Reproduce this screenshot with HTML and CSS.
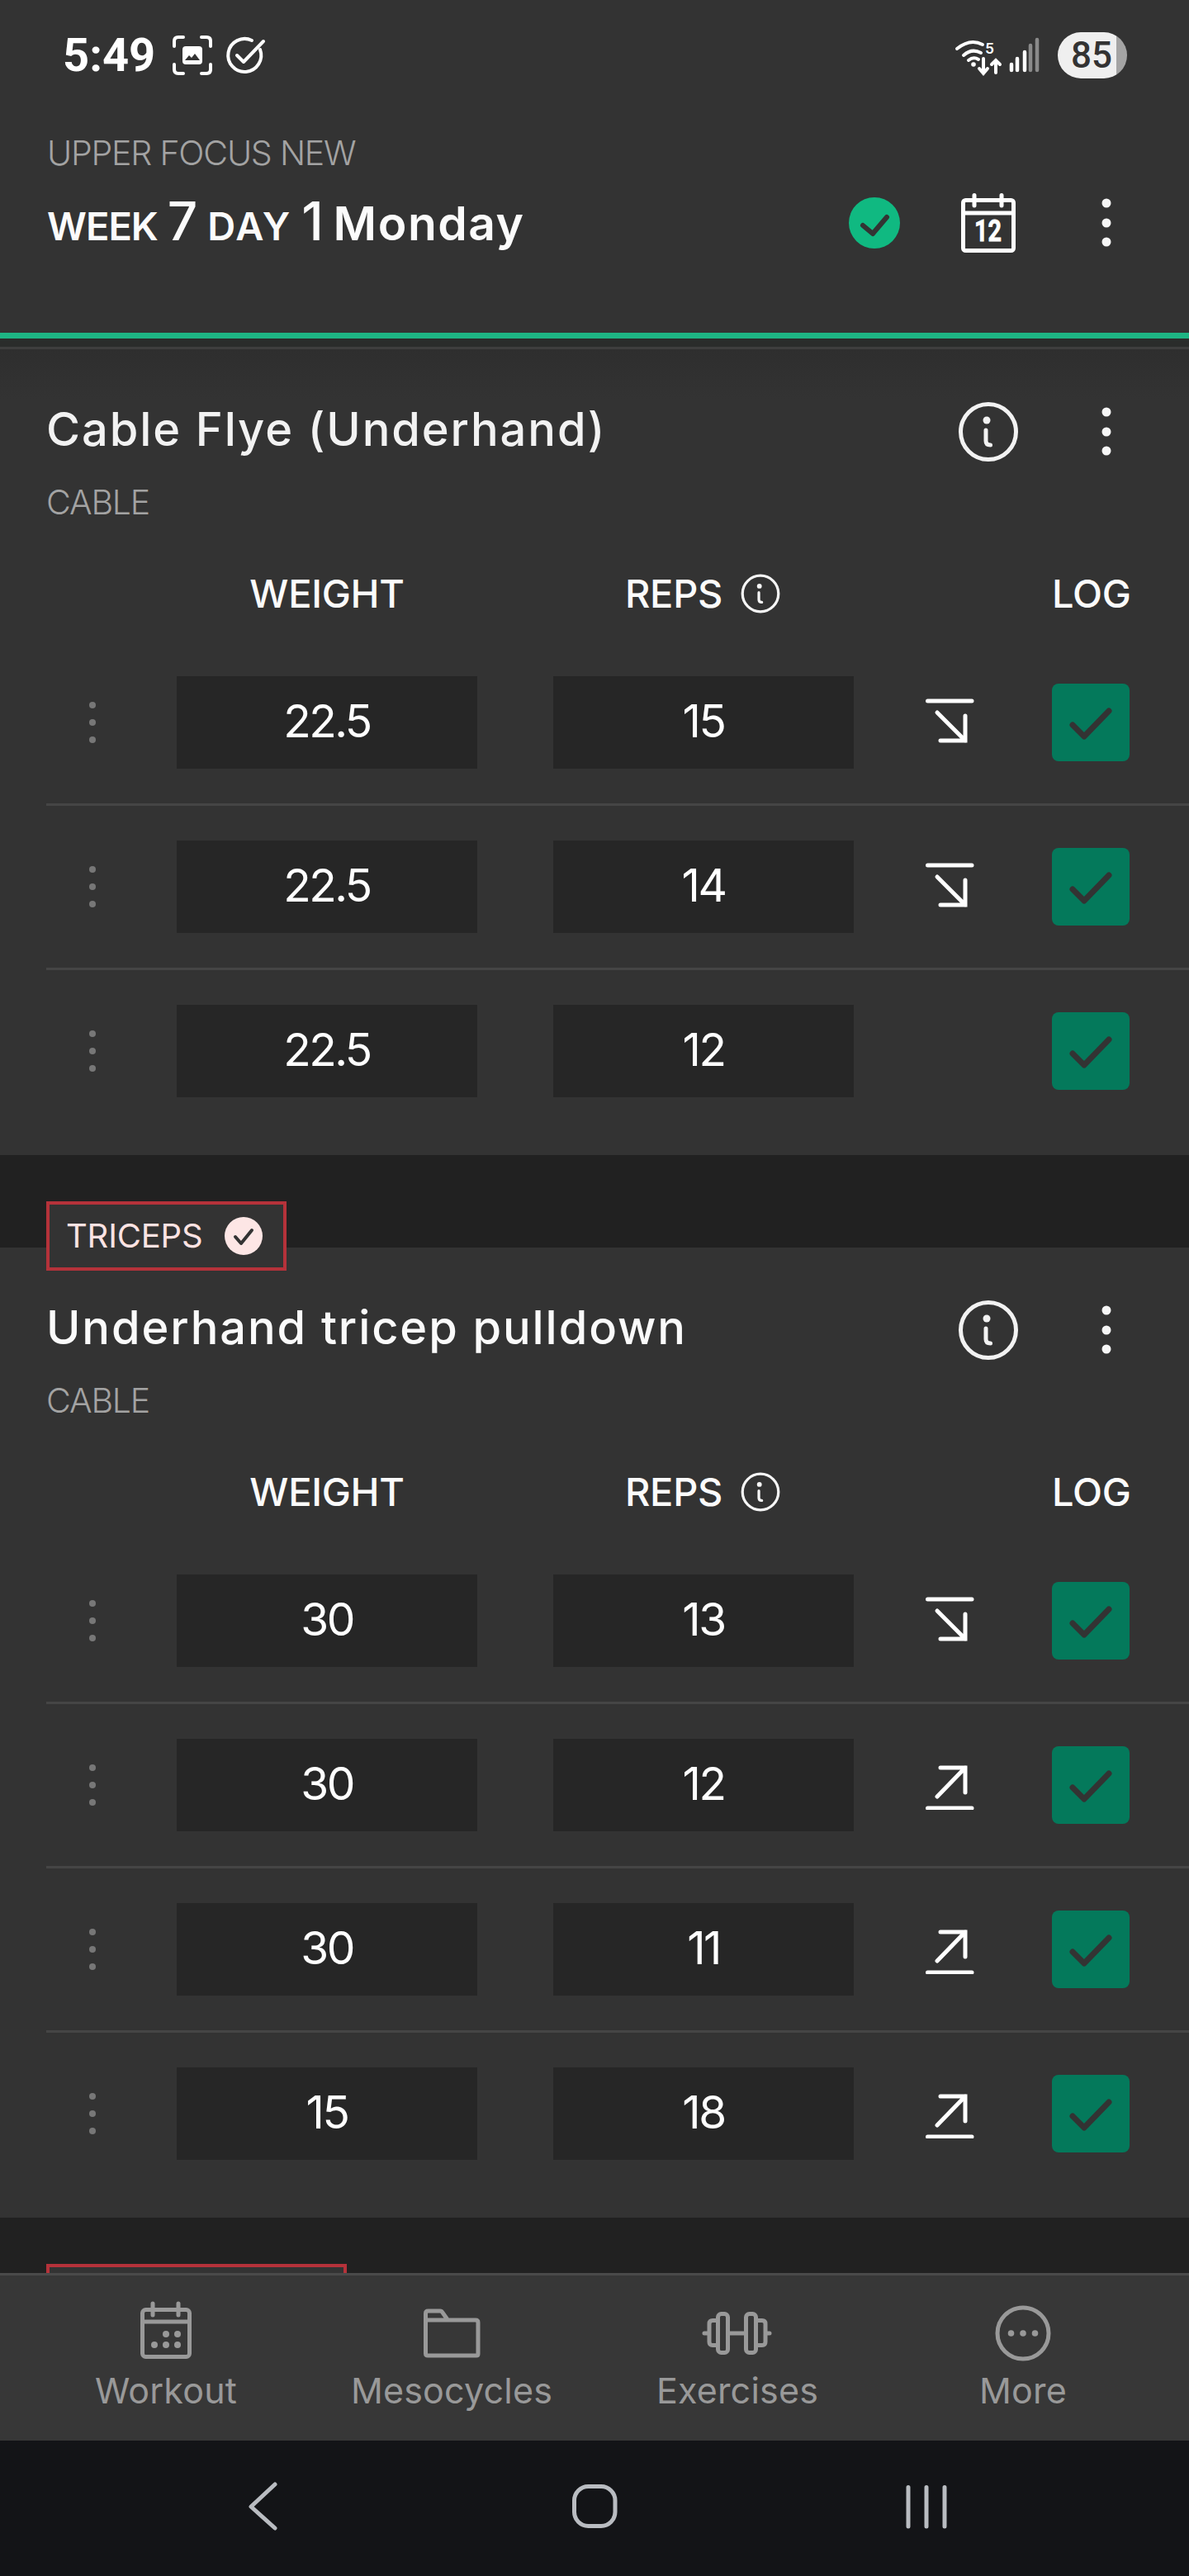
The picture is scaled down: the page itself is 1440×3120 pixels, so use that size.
FILE: index.html
```html
<!DOCTYPE html>
<html lang="en">
<head>
<meta charset="utf-8">
<title>Workout</title>
<link rel="stylesheet" href="styles.css">
</head>
<body>
<svg class="defs" width="0" height="0" aria-hidden="true">
  <defs>
    <symbol id="info-lg" viewBox="0 0 80 80"><circle cx="40" cy="40" r="33.5" fill="none" stroke="currentColor" stroke-width="5"/><circle cx="38" cy="26" r="4.5" fill="currentColor"/><path d="M37 38v13q0 5 5.500 5" fill="none" stroke="currentColor" stroke-width="5" stroke-linecap="round"/></symbol>
    <symbol id="kebab" viewBox="0 0 24 80"><circle cx="12" cy="16" r="5.500" fill="currentColor"/><circle cx="12" cy="40" r="5.500" fill="currentColor"/><circle cx="12" cy="63" r="5.500" fill="currentColor"/></symbol>
    <symbol id="arrow-down" viewBox="0 0 60 60"><path d="M3.500 4H57M15 18l34 34M49 22v30H19" fill="none" stroke="currentColor" stroke-width="5" stroke-linecap="round"/></symbol>
    <symbol id="arrow-up" viewBox="0 0 60 60"><path d="M3.500 58H57M15 44L49 9M49 39V9H19" fill="none" stroke="currentColor" stroke-width="5" stroke-linecap="round"/></symbol>
    <symbol id="check" viewBox="0 0 94 94"><path d="M25 50l14 14 30-31" fill="none" stroke="#333" stroke-width="7" stroke-linecap="round" stroke-linejoin="round"/></symbol>
    <symbol id="grip" viewBox="0 0 8 50"><circle cx="4" cy="4" r="4" fill="currentColor"/><circle cx="4" cy="25" r="4" fill="currentColor"/><circle cx="4" cy="46" r="4" fill="currentColor"/></symbol>
  </defs>
</svg>
<div class="page">
  <header class="top">
    <div class="status">
      <div class="status-left">
        <span class="time">5:49</span>
        <svg class="st-shot" width="48" height="48" viewBox="0 0 48 48"><path d="M2 13V7q0-5 5-5h6M35 2h6q5 0 5 5v6M2 35v6q0 5 5 5h6M35 46h6q5 0 5-5v-6" fill="none" stroke="#fff" stroke-width="4" stroke-linecap="round"/><rect x="12" y="13" width="24" height="22" rx="4" fill="#fff"/><path d="M15 30l5-6 3 3 4-5 6 8z" fill="#333"/></svg>
        <svg class="st-done" width="46" height="48" viewBox="0 0 46 48"><path d="M40 17A20 20 0 1 1 30 6" fill="none" stroke="#fff" stroke-width="4" stroke-linecap="round"/><path d="M12 24l8 8 24-25" fill="none" stroke="#fff" stroke-width="4" stroke-linecap="round" stroke-linejoin="round"/></svg>
      </div>
      <div class="status-right">
        <svg class="st-wifi" width="56" height="44" viewBox="0 0 56 44"><g fill="none" stroke="#fff" stroke-width="4" stroke-linecap="round"><path d="M2 14Q18 1 33 9"/><path d="M10 22Q20 13 31 19"/><path d="M16 28Q22 23 28 27"/><path d="M34 26v18M29 38l5 6 5-6"/><path d="M49 43V28M44 33l5-5 5 5"/></g><circle cx="22" cy="33" r="2.800" fill="#fff"/><text x="36" y="20" class="st-five">5</text></svg>
        <svg class="st-signal" width="38" height="42" viewBox="0 0 38 42"><g fill="none" stroke-width="4.500" stroke-linecap="round"><path d="M3 39v-7M10 39V25M19 39V17" stroke="#fff"/><path d="M26 39V9M34 39V2" stroke="#8a8a8a"/></g></svg>
        <span class="battery">85</span>
      </div>
    </div>
    <p class="program">UPPER FOCUS NEW</p>
    <div class="title-row">
      <h1 class="week"><span class="w-label">WEEK</span> <span class="w-num">7</span> <span class="w-label w-label-day">DAY</span> <span class="w-num">1</span> <span class="w-day">Monday</span></h1>
      <div class="top-actions">
        <svg class="ok" width="62" height="62" viewBox="0 0 62 62"><circle cx="31" cy="31" r="31" fill="#10b981"/><path d="M17 34l12 10 17-20" fill="none" stroke="#333" stroke-width="6" stroke-linecap="round" stroke-linejoin="round"/></svg>
        <svg class="cal" width="66" height="72" viewBox="0 0 66 72"><rect x="2.500" y="8.500" width="61" height="61" rx="3" fill="none" stroke="#fff" stroke-width="5"/><path d="M2.500 24H63.500" stroke="#fff" stroke-width="5"/><path d="M16 2.500V15M49 2.500V15" stroke="#fff" stroke-width="5" stroke-linecap="round"/><text x="16" y="58" class="cal-num" textLength="33" lengthAdjust="spacingAndGlyphs">12</text></svg>
        <svg class="kebab top-kebab"><use href="#kebab"/></svg>
      </div>
    </div>
  </header>
  <div class="progress"></div>
  <div class="under"></div>
  <div class="hair"></div>

  <main class="list">
    <section class="card">
      <div class="ex-head">
        <div class="ex-text">
          <h2 class="ex-title">Cable Flye (Underhand)</h2>
          <p class="ex-type">CABLE</p>
        </div>
        <div class="ex-actions">
          <svg class="info"><use href="#info-lg"/></svg>
          <svg class="kebab"><use href="#kebab"/></svg>
        </div>
      </div>
      <div class="cols">
        <span class="c-weight">WEIGHT</span>
        <span class="c-reps">REPS <svg class="info-sm" width="52" height="52" viewBox="0 0 80 80"><use href="#info-lg"/></svg></span>
        <span class="c-log">LOG</span>
      </div>
      <div class="sets">
        <div class="set"><svg class="grip"><use href="#grip"/></svg><div class="val">22.5</div><div class="val val-reps">15</div><svg class="trend"><use href="#arrow-down"/></svg><div class="log"><svg><use href="#check"/></svg></div></div>
        <div class="set"><svg class="grip"><use href="#grip"/></svg><div class="val">22.5</div><div class="val val-reps">14</div><svg class="trend"><use href="#arrow-down"/></svg><div class="log"><svg><use href="#check"/></svg></div></div>
        <div class="set"><svg class="grip"><use href="#grip"/></svg><div class="val">22.5</div><div class="val val-reps">12</div><span class="trend"></span><div class="log"><svg><use href="#check"/></svg></div></div>
      </div>
    </section>

    <section class="card">
      <div class="tag"><span class="tag-label">TRICEPS</span><svg class="tag-ok" width="46" height="46" viewBox="0 0 46 46"><circle cx="23" cy="23" r="23" fill="#fde6e5"/><path d="M13 24l7 8 13-16" fill="none" stroke="#333" stroke-width="4" stroke-linecap="round" stroke-linejoin="round"/></svg></div>
      <div class="ex-head">
        <div class="ex-text">
          <h2 class="ex-title ex-title-b">Underhand tricep pulldown</h2>
          <p class="ex-type">CABLE</p>
        </div>
        <div class="ex-actions">
          <svg class="info"><use href="#info-lg"/></svg>
          <svg class="kebab"><use href="#kebab"/></svg>
        </div>
      </div>
      <div class="cols">
        <span class="c-weight">WEIGHT</span>
        <span class="c-reps">REPS <svg class="info-sm" width="52" height="52" viewBox="0 0 80 80"><use href="#info-lg"/></svg></span>
        <span class="c-log">LOG</span>
      </div>
      <div class="sets">
        <div class="set"><svg class="grip"><use href="#grip"/></svg><div class="val">30</div><div class="val val-reps">13</div><svg class="trend"><use href="#arrow-down"/></svg><div class="log"><svg><use href="#check"/></svg></div></div>
        <div class="set"><svg class="grip"><use href="#grip"/></svg><div class="val">30</div><div class="val val-reps">12</div><svg class="trend"><use href="#arrow-up"/></svg><div class="log"><svg><use href="#check"/></svg></div></div>
        <div class="set"><svg class="grip"><use href="#grip"/></svg><div class="val">30</div><div class="val val-reps">11</div><svg class="trend"><use href="#arrow-up"/></svg><div class="log"><svg><use href="#check"/></svg></div></div>
        <div class="set"><svg class="grip"><use href="#grip"/></svg><div class="val">15</div><div class="val val-reps">18</div><svg class="trend"><use href="#arrow-up"/></svg><div class="log"><svg><use href="#check"/></svg></div></div>
      </div>
    </section>

    <section class="card card-next">
      <div class="tag tag-wide"></div>
    </section>
  </main>

  <nav class="tabs">
    <a class="tab">
      <svg class="tab-ico" viewBox="0 0 80 80"><rect x="11.500" y="11.500" width="57" height="57" rx="4" fill="none" stroke="currentColor" stroke-width="5"/><path d="M11.500 26H68.500" stroke="currentColor" stroke-width="5"/><path d="M24 4v14M55 4v14" stroke="currentColor" stroke-width="5" stroke-linecap="round"/><g fill="currentColor"><circle cx="40" cy="41" r="4"/><circle cx="54" cy="41" r="4"/><circle cx="26" cy="54" r="4"/><circle cx="40" cy="54" r="4"/><circle cx="54" cy="54" r="4"/></g></svg>
      <span class="tab-label">Workout</span>
    </a>
    <a class="tab">
      <svg class="tab-ico" viewBox="0 0 80 80"><path d="M8.500 16q0-3 3-3H26q2 0 3 2l5 7q1 2 3 2H69q3 0 3 3v38q0 2-2 2H11q-2.500 0-2.500-2.500zM8.500 24H38" fill="none" stroke="currentColor" stroke-width="5" stroke-linejoin="round"/></svg>
      <span class="tab-label">Mesocycles</span>
    </a>
    <a class="tab">
      <svg class="tab-ico tab-ico-free" viewBox="0 0 80 80"><g fill="none" stroke="currentColor" stroke-width="5" stroke-linecap="round" stroke-linejoin="round"><rect x="16.500" y="16.500" width="12" height="47" rx="4"/><rect x="50.500" y="16.500" width="12" height="47" rx="4"/><path d="M16.500 24.500H10q-4 0-4 4v22q0 4 4 4h6.500M62.500 24.500H70q4 0 4 4v22q0 4-4 4h-7.500M28.500 40h22M0 40h6M74 40h5"/></g></svg>
      <span class="tab-label">Exercises</span>
    </a>
    <a class="tab">
      <svg class="tab-ico" viewBox="0 0 80 80"><circle cx="40" cy="40" r="31" fill="none" stroke="currentColor" stroke-width="5"/><g fill="currentColor"><circle cx="25.500" cy="40" r="3.800"/><circle cx="40" cy="40" r="3.800"/><circle cx="54.500" cy="40" r="3.800"/></g></svg>
      <span class="tab-label">More</span>
    </a>
  </nav>

  <footer class="sysnav">
    <svg class="sys-ico" viewBox="0 0 60 60"><path d="M45 3L16 30l29 26" fill="none" stroke="currentColor" stroke-width="5" stroke-linecap="round" stroke-linejoin="round"/></svg>
    <svg class="sys-ico" viewBox="0 0 60 60"><rect x="5.500" y="5.500" width="49.500" height="48" rx="17" fill="none" stroke="currentColor" stroke-width="5"/></svg>
    <svg class="sys-ico" viewBox="0 0 60 60"><path d="M8 6.500V54M30 6.500V54M52 6.500V54" fill="none" stroke="currentColor" stroke-width="5" stroke-linecap="round"/></svg>
  </footer>
</div>
</body>
</html>
```

FILE: styles.css
```css
* { box-sizing: border-box; }
html, body { margin: 0; padding: 0; background: #222; }
body { font-family: Inter, "Noto Sans", sans-serif; color: #fff; }
.defs { display: block; width: 0; height: 0; overflow: hidden; }
svg { display: block; overflow: visible; }
h1, h2, p { margin: 0; font-weight: inherit; }

.page { width: 1440px; height: 3120px; overflow: hidden; display: flex; flex-direction: column; background: #212121; }

/* header */
.top { height: 403px; flex: none; background: #333; }
.status { height: 134px; display: flex; justify-content: space-between; align-items: center; padding: 0 75px 0 76px; }
.status-left, .status-right { display: flex; align-items: center; }
.time { font-family: Roboto, sans-serif; font-weight: 700; font-size: 56px; line-height: 60px; width: 133px; }
.st-shot { margin-right: 18px; }
.st-five { font-family: Roboto, sans-serif; font-size: 19px; font-weight: 500; fill: #fff; }
.st-wifi { margin-right: -3px; }
.st-signal { margin: 0 21px 0 12px; }
.battery { width: 84px; height: 56px; border-radius: 28px; background: linear-gradient(90deg, #efefef 85%, #a4a4a4 85%); color: #333; font-family: Roboto, sans-serif; font-weight: 500; font-size: 44px; line-height: 56px; padding-left: 16px; }
.program { margin: 26px 0 0 57px; font-size: 41px; line-height: 50px; font-weight: 300; color: #a3a3a3; letter-spacing: -1.2px; }
.title-row { display: flex; justify-content: space-between; align-items: center; height: 80px; margin-top: 20px; padding: 0 88px 0 57px; }
.week { height: 80px; line-height: 88px; font-size: 47px; font-weight: 600; white-space: nowrap; color: #fbfbfb; }
.w-label { font-size: 47px; letter-spacing: -1px; }
.w-label-day { letter-spacing: 2px; }
.w-num { font-size: 64px; font-weight: 500; line-height: 1; }
.w-day { font-size: 57px; line-height: 1; letter-spacing: 1.5px; }
.top-actions { display: flex; align-items: center; }
.cal { margin-left: 74px; }
.cal-num { font-family: Roboto, sans-serif; font-weight: 700; font-size: 37px; fill: #fff; stroke: #fff; stroke-width: 0.8px; }
.kebab { width: 24px; height: 80px; color: #f6f6f6; }
.top-kebab { margin-left: 98px; }

.progress { height: 7px; flex: none; background: #1eb584; }
.under { height: 10px; flex: none; background: #2a2c2b; }
.hair { height: 3px; flex: none; background: #3e3e3e; }

/* list */
.list { flex: 1; min-height: 0; overflow: hidden; display: flex; flex-direction: column; gap: 112px; }
.card { position: relative; flex: none; background: #333; padding-bottom: 70px; }
.card:first-child { background: linear-gradient(#2e2e2e, #333 60px); }
.card-next { height: 60px; padding: 0; }

.tag { position: absolute; left: 56px; top: -56px; width: 291px; height: 84px; border: 4px solid #b5323a; background: #333; display: flex; align-items: center; padding-left: 20px; }
.tag-wide { width: 364px; }
.tag-label { width: 192px; font-size: 40px; line-height: 48px; color: #fde3e3; letter-spacing: -0.200px; }

.ex-head { display: flex; justify-content: space-between; padding: 0 88px 0 56px; }
.ex-text { padding-top: 57px; }
.ex-title { font-size: 56px; line-height: 80px; font-weight: 500; color: #f2f2f2; letter-spacing: 1.900px; white-space: nowrap; }
.ex-title-b { color: #fafafa; }
.ex-type { margin-top: 28px; font-size: 41px; line-height: 40px; font-weight: 300; color: #a3a3a3; letter-spacing: -1.200px; }
.ex-actions { display: flex; padding-top: 60px; }
.info { width: 80px; height: 80px; color: #f2f2f2; }
.ex-actions .kebab { margin-left: 91px; }

.cols, .set { display: grid; grid-template-columns: 158px 364px 456px 240px 94px; align-items: center; }
.cols { margin: 61px 0 28px 56px; height: 60px; font-size: 47px; line-height: 60px; font-weight: 500; letter-spacing: -0.300px; color: #fbfbfb; }
.c-weight { grid-column: 2; text-align: center; }
.c-reps { grid-column: 3; justify-self: end; width: 364px; display: flex; justify-content: center; align-items: center; gap: 20px; }
.info-sm { color: #f6f6f6; }
.c-log { grid-column: 5; text-align: right; }

.sets { padding-left: 56px; }
.set { padding: 42px 0; border-bottom: 3px solid #454545; }
.set:last-child { padding-bottom: 0; border-bottom: 0; }
.grip { width: 8px; height: 50px; margin-left: 52px; color: #777; }
.val { width: 364px; height: 112px; padding-bottom: 4px; background: #262626; display: flex; align-items: center; justify-content: center; font-size: 55px; line-height: 108px; font-weight: 400; letter-spacing: -2.500px; }
.val-reps { justify-self: end; }
.trend { width: 60px; height: 60px; margin-left: 86px; color: #fff; }
.log { width: 94px; height: 94px; border-radius: 8px; background: #04795b; }
.log svg { width: 94px; height: 94px; }

/* tabs */
.tabs { height: 203px; flex: none; border-top: 3px solid #4a4a4a; background: #373737; display: grid; grid-template-columns: repeat(4, 346px); padding: 30px 28px 0; color: #999; }
.tab { display: flex; flex-direction: column; align-items: center; }
.tab-ico { width: 80px; height: 80px; }
.tab-label { margin-top: 4px; font-size: 43px; line-height: 50px; letter-spacing: 0.200px; font-weight: 400; }

.sysnav { height: 164px; flex: none; background: #131417; display: grid; grid-template-columns: repeat(3, 402px); justify-items: center; align-items: center; padding: 0 117px 4px; color: #b9bcc1; }
.sys-ico { width: 60px; height: 60px; }
```
